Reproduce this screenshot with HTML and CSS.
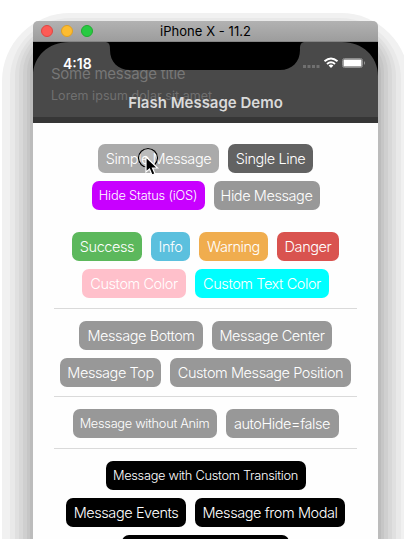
FILE: index.html
```
<!DOCTYPE html>
<html lang="en">
<head>
<meta charset="utf-8">
<title>Flash Message Demo</title>
<link rel="stylesheet" href="styles.css">
</head>
<body>
<svg class="shadow" width="404" height="539" viewBox="0 0 404 539">
  <rect x="2" y="13" width="407" height="700" rx="68" fill="#f1f1f1"/>
  <rect x="10" y="18" width="391" height="700" rx="61" fill="#e9e9e9"/>
  <rect x="15" y="22" width="381" height="700" rx="55" fill="#e0e0e0"/>
  <rect x="19" y="26" width="373" height="700" rx="49" fill="#d8d8d8"/>
  <rect x="23" y="30" width="365" height="700" rx="43" fill="#cfcfcf"/>
  <rect x="27" y="35" width="357" height="700" rx="37" fill="#c6c6c6"/>
  <rect x="30" y="42" width="351" height="700" rx="32" fill="#bcbcbc"/>
</svg>
<main class="window">
  <header class="titlebar">
    <i class="light red"></i><i class="light yellow"></i><i class="light green"></i>
    <span class="device">iPhone X - 11.2</span>
  </header>
  <section class="nav">
    <svg class="bezel" width="345" height="34" viewBox="0 0 345 34">
      <path d="M0 0H36C16 0 0 14 0 34ZM345 0H309C329 0 345 14 345 34ZM73 0C77 1 77 4 77 8C77 20 85 28 97 28H247C259 28 267 20 267 8C267 4 267 1 271 0Z"/>
    </svg>
    <div class="flash"><p class="flash-title">Some message title</p><p class="flash-text">Lorem ipsum dolar sit amet</p></div>
    <h1>Flash Message Demo</h1>
    <span class="time">4:18</span>
    <svg class="status" width="66" height="14" viewBox="0 0 66 14">
      <path fill="#707070" d="M1 9h3v3h-3zM5.500 9h3v3h-3zM10 9h3v3h-3zM14.500 9h3v3h-3z"/>
      <g fill="none" stroke="#fff" stroke-width="2"><path d="M22.500 5.300Q29 -0.300 35.500 5.300"/><path d="M25 8Q29 4.600 33 8"/></g>
      <path fill="#fff" d="M26.600 9.500Q29 7.600 31.400 9.500L29 12Z"/>
      <rect x="40.500" y="2.500" width="20" height="9" rx="2" fill="none" stroke="#8d8d8d"/>
      <rect x="41.500" y="3.500" width="18" height="7" rx=".6" fill="#fff"/>
      <path d="M62 5Q64 7 62 9Z" fill="#999"/>
    </svg>
  </section>
  <section class="content">
    <div class="group first">
      <div class="row"><button class="light-gray w121">Simple Message</button><button class="dark w85">Single Line</button></div>
      <div class="row"><button class="purple small w113">Hide Status (iOS)</button><button class="w106">Hide Message</button></div>
    </div>
    <div class="group colors">
      <div class="row"><button class="success w70">Success</button><button class="info w39">Info</button><button class="warning w69">Warning</button><button class="danger w62">Danger</button></div>
      <div class="row"><button class="pink w104">Custom Color</button><button class="cyan w134">Custom Text Color</button></div>
    </div>
    <div class="group ruled">
      <div class="row"><button class="w124">Message Bottom</button><button class="w120">Message Center</button></div>
      <div class="row"><button class="w101">Message Top</button><button class="w181">Custom Message Position</button></div>
    </div>
    <div class="group ruled tight">
      <div class="row"><button class="small w144">Message without Anim</button><button class="w113">autoHide=false</button></div>
    </div>
    <div class="group ruled">
      <div class="row"><button class="black small w200">Message with Custom Transition</button></div>
      <div class="row"><button class="black w120">Message Events</button><button class="black w150">Message from Modal</button></div>
      <div class="row"><button class="black w167"></button></div>
    </div>
  </section>
</main>
<svg class="cursor" width="26" height="32" viewBox="0 0 26 32">
  <circle cx="11" cy="11" r="9.700" fill="#fff" fill-opacity=".2" stroke="#fff"/>
  <circle cx="11" cy="11" r="9.500" fill="none" stroke="#000" stroke-width="1.200"/>
  <path d="M9 10V25L12.500 22L15 28L18 26.700L15.500 21H20.500Z" stroke="#fff" stroke-width="1.200"/>
</svg>
</body>
</html>
```
FILE: styles.css
```
* { box-sizing: border-box; }
body {
  margin: 0;
  width: 404px;
  height: 539px;
  overflow: hidden;
  position: relative;
  background: #fff;
  font-family: Inter, "Liberation Sans", sans-serif;
}
p, h1 { margin: 0; }
.shadow { position: absolute; left: 0; top: 0; }
.window {
  position: relative;
  width: 345px;
  height: 518px;
  margin: 21px 0 0 33px;
  background: #fefefe;
  border-radius: 5px 5px 0 0;
  overflow: hidden;
}
.titlebar {
  position: relative;
  height: 21px;
  display: flex;
  align-items: center;
  gap: 8px;
  padding-left: 8px;
  background: linear-gradient(#b2b2b2, #9d9d9d);
  border-bottom: 1px solid #858585;
}
.light { width: 12px; height: 12px; border-radius: 50%; }
.red { background: #fd5b56; border: 1px solid #df4642; }
.yellow { background: #fdbc30; border: 1px solid #dfa023; }
.green { background: #28ca42; border: 1px solid #20ac30; }
.device {
  position: absolute;
  inset: 0;
  text-align: center;
  font-size: 13px;
  line-height: 21px;
  letter-spacing: 0.05px;
}
.nav {
  position: relative;
  height: 81px;
  background: #494949;
  border-bottom: 6px solid #363636;
}
.bezel { position: absolute; left: 0; top: 0; }
.flash { padding: 22px 0 0 18px; white-space: nowrap; }
.flash-title { color: #777; font-size: 15px; line-height: 20px; letter-spacing: -0.25px; }
.flash-text { color: #707070; font-size: 12.5px; line-height: 23px; letter-spacing: 0.05px; }
.nav h1 {
  position: absolute;
  left: 0;
  top: 51px;
  width: 100%;
  text-align: center;
  color: #dadada;
  font-size: 15px;
  font-weight: 600;
  line-height: 20px;
}
.time {
  position: absolute;
  left: 30px;
  top: 13px;
  color: #fff;
  font-size: 14px;
  font-weight: 600;
  line-height: 17px;
}
.status { position: absolute; left: 269px; top: 14px; }
.group { display: flex; flex-direction: column; gap: 8px; }
.first { padding-top: 21px; }
.colors { padding-top: 22px; }
.ruled {
  margin: 10px 21px 0;
  padding-top: 12px;
  border-top: 1px solid #dadada;
}
.tight { margin-top: 9px; }
.row { display: flex; justify-content: center; gap: 9px; }
button {
  flex: none;
  height: 29px;
  padding: 0;
  border: 0;
  border-radius: 7px;
  background: #989898;
  color: #fff;
  font: 300 14.5px/29px Inter, "Liberation Sans", sans-serif;
  letter-spacing: -0.42px;
  white-space: nowrap;
}
.small { font-size: 12.8px; letter-spacing: -0.29px; }
.light-gray { background: #aaa; }
.dark { background: #626262; }
.purple { background: #c800ff; letter-spacing: -0.18px; }
.success { background: #5cb85c; }
.info { background: #5bc0de; }
.warning { background: #f0ad4e; }
.danger { background: #d9534f; }
.pink { background: #ffc0cb; }
.cyan { background: #0ff; }
.black { background: #000; }
.w39 { width: 39px; }
.w62 { width: 62px; }
.w69 { width: 69px; }
.w70 { width: 70px; }
.w85 { width: 85px; }
.w101 { width: 101px; }
.w104 { width: 104px; }
.w106 { width: 106px; }
.w113 { width: 113px; }
.w120 { width: 120px; }
.w121 { width: 121px; }
.w124 { width: 124px; }
.w134 { width: 134px; }
.w144 { width: 144px; }
.w150 { width: 150px; }
.w167 { width: 167px; }
.w181 { width: 181px; }
.w200 { width: 200px; }
.cursor { position: absolute; left: 137px; top: 147px; }
```
